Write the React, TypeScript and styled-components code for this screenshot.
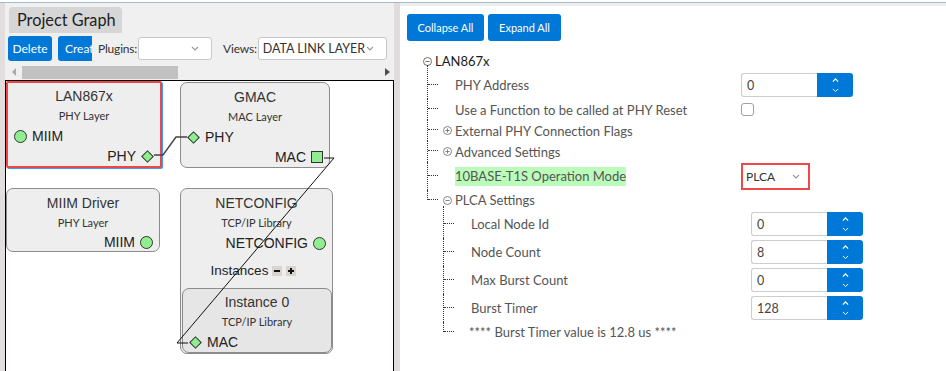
import React from 'react'
import styled, { createGlobalStyle } from 'styled-components'

const GlobalStyle = createGlobalStyle`
  html, body {
    margin: 0;
    padding: 0;
    background: #ffffff;
  }
  body {
    font-family: Lato, 'Open Sans', sans-serif;
  }
  * {
    box-sizing: border-box;
  }
`

const UI = "Lato, 'Open Sans', sans-serif"
const ARIAL = "'Liberation Sans', Arial, sans-serif"

const Frame = styled.div`
  width: 946px;
  height: 371px;
  overflow: hidden;
  padding-top: 2px;
  display: flex;
  flex-direction: column;
`

const Panels = styled.div`
  flex: 1;
  min-height: 0;
  display: flex;
  border-top: 1px solid #a4b8d0;
`

/* ---------- left: project graph ---------- */

const LeftPanel = styled.div`
  width: 394px;
  display: flex;
  flex-direction: column;
  background: #f0f0f0;
  border-left: 5px solid #e2dede;
`

const Tab = styled.div`
  margin: 4px 0 0 4px;
  width: 113px;
  height: 26px;
  background: #d6d6d6;
  border-radius: 4px 4px 0 0;
  padding-left: 8px;
  font-family: ${UI};
  font-size: 16.3px;
  line-height: 26px;
  color: #1e1e1e;
`

const Toolbar = styled.div`
  margin-top: 3px;
  height: 25px;
  padding-left: 3px;
  display: flex;
  align-items: center;
`

const BlueButton = styled.button<{ $w: number; $clip?: boolean }>`
  flex: none;
  height: 25px;
  width: ${p => p.$w}px;
  padding: ${p => (p.$clip ? '0 0 0 7px' : '0')};
  border: none;
  border-radius: ${p => (p.$clip ? '3px 0 0 3px' : '3px')};
  background: #0078d7;
  color: #ffffff;
  font-family: ${UI};
  font-size: 12px;
  white-space: nowrap;
  overflow: hidden;
  text-align: ${p => (p.$clip ? 'left' : 'center')};
  margin-right: 6px;
`

const ToolLabel = styled.span<{ $gap?: number }>`
  flex: none;
  margin-left: ${p => p.$gap || 0}px;
  margin-right: 1px;
  font-family: ${UI};
  font-size: 12px;
  letter-spacing: -0.2px;
  color: #333;
  white-space: nowrap;
`

const Select = styled.div<{ $w: number }>`
  flex: none;
  width: ${p => p.$w}px;
  height: 23px;
  background: #ffffff;
  border: 1px solid #c8c8c8;
  border-radius: 3px;
  display: flex;
  align-items: center;
  justify-content: space-between;
  padding: 0 12px 0 4px;
  font-family: ${UI};
  font-size: 12.5px;
  color: #333;
  white-space: nowrap;
`

const HScroll = styled.div`
  margin-top: 3px;
  height: 16px;
  display: flex;
  align-items: center;
  padding-left: 7px;
`

const Arrow = styled.span<{ $dir: 'left' | 'right' }>`
  width: 0;
  height: 0;
  border-top: 4px solid transparent;
  border-bottom: 4px solid transparent;
  ${p =>
    p.$dir === 'left'
      ? 'border-right: 4px solid #a8a8a8;'
      : 'border-left: 5px solid #505050; margin-left: 207px;'}
`

const Thumb = styled.div`
  margin-left: 6px;
  width: 156px;
  height: 13px;
  background: #c1c1c1;
`

const Canvas = styled.div`
  flex: 1;
  position: relative;
  background: #ffffff;
  border: 1px solid #000;
  border-bottom: none;
  overflow: hidden;
`

const Node = styled.div<{ $x: number; $y: number; $w: number; $h: number; $selected?: boolean }>`
  position: absolute;
  left: ${p => p.$x}px;
  top: ${p => p.$y}px;
  width: ${p => p.$w}px;
  height: ${p => p.$h}px;
  background: #eeeeee;
  border: ${p => (p.$selected ? '2px solid #f04545' : '1px solid #8c8c8c')};
  border-radius: ${p => (p.$selected ? 2 : 7)}px;
  box-shadow: ${p => (p.$selected ? '1px 1px 0 #3d9cf5' : 'none')};
  padding-top: ${p => (p.$selected ? 3 : 4)}px;
  display: flex;
  flex-direction: column;
`

const NodeTitle = styled.div`
  height: 20px;
  line-height: 20px;
  text-align: center;
  font-family: ${ARIAL};
  font-size: 14px;
  color: #333;
`

const NodeSub = styled.div`
  height: 20px;
  line-height: 20px;
  text-align: center;
  font-family: ${UI};
  font-size: 11px;
  color: #333;
`

const PortRow = styled.div<{ $side: 'left' | 'right' }>`
  height: 20px;
  display: flex;
  align-items: center;
  justify-content: ${p => (p.$side === 'left' ? 'flex-start' : 'flex-end')};
  gap: 5px;
  padding: 0 6px;
  font-family: ${ARIAL};
  font-size: 14px;
  color: #222;
`

const Port = styled.span<{ $shape: 'circle' | 'diamond' | 'square' }>`
  flex: none;
  background: #90ee90;
  border: ${p => (p.$shape === 'circle' ? '1.5px' : '1px')} solid #333;
  width: ${p => (p.$shape === 'circle' ? 13 : p.$shape === 'square' ? 12 : 9)}px;
  height: ${p => (p.$shape === 'circle' ? 13 : p.$shape === 'square' ? 12 : 9)}px;
  border-radius: ${p => (p.$shape === 'circle' ? '50%' : '0')};
  transform: ${p => (p.$shape === 'diamond' ? 'rotate(45deg)' : 'none')};
  margin: ${p => (p.$shape === 'diamond' ? '0 2px' : '0')};
`

const InstancesRow = styled.div`
  height: 35px;
  display: flex;
  align-items: center;
  justify-content: center;
  padding-right: 6px;
  font-family: ${ARIAL};
  font-size: 13.5px;
  color: #222;
`

const MiniBox = styled.span`
  width: 10px;
  height: 10px;
  margin-left: 4px;
  background: #d8d4d0;
  display: flex;
  align-items: center;
  justify-content: center;
`

const InstanceBox = styled.div`
  margin: 0 0 -1px 1px;
  height: 65px;
  background: #e6e6e6;
  border: 1px solid #8c8c8c;
  border-radius: 7px;
  padding-top: 3px;
  display: flex;
  flex-direction: column;
`

const Wires = styled.svg`
  position: absolute;
  left: 0;
  top: 0;
  pointer-events: none;
`

/* ---------- splitter ---------- */

const Splitter = styled.div`
  width: 6px;
  background: #e0dcdc;
`

/* ---------- right: configuration tree ---------- */

const RightPanel = styled.div`
  flex: 1;
  background: #ffffff;
  border-top: 3px solid #ededed;
  padding: 8px 0 0 7px;
`

const ButtonRow = styled.div`
  display: flex;
  gap: 4px;
`

const ActionButton = styled.button<{ $w: number }>`
  width: ${p => p.$w}px;
  height: 27px;
  border: none;
  border-radius: 3px;
  background: #0078d7;
  color: #fff;
  font-family: ${UI};
  font-size: 11px;
  padding: 0;
`

const Tree = styled.div`
  margin-top: 10px;
  padding-left: 16px;
`

const RootHead = styled.div`
  height: 20px;
  display: flex;
  align-items: center;
  gap: 3px;
  font-family: ${UI};
  font-size: 13px;
  color: #1a1a1a;
`

const Children = styled.div<{ $indent: number }>`
  margin-left: ${p => p.$indent}px;
`

const Row = styled.div<{ $h: number; $last?: boolean; $lead: number }>`
  position: relative;
  height: ${p => p.$h}px;
  display: flex;
  align-items: center;
  padding-left: 16px;
  &::before {
    content: '';
    position: absolute;
    left: 0;
    top: ${p => -p.$lead}px;
    ${p => (p.$last ? `height: ${Math.floor(p.$h / 2) + p.$lead}px;` : 'bottom: 0;')}
    border-left: 1px dotted #333;
  }
  &::after {
    content: '';
    position: absolute;
    left: 1px;
    top: ${p => Math.floor(p.$h / 2) - 1}px;
    width: 10px;
    border-top: 1px dotted #333;
  }
`

const IconSlot = styled.span`
  width: 9px;
  height: 9px;
  margin-right: 3px;
  display: flex;
`

const Label = styled.span<{ $w: number }>`
  width: ${p => p.$w}px;
  flex: none;
  font-family: ${UI};
  font-size: 13px;
  color: #555;
  white-space: nowrap;
`

const Highlight = styled.span`
  background: #bbfcbb;
  padding: 1px 0 2px;
`

const Spin = styled.div`
  display: flex;
  height: 24px;
`

const SpinField = styled.div`
  width: 76px;
  height: 24px;
  border: 1px solid #cccccc;
  border-right: none;
  border-radius: 3px 0 0 3px;
  padding-left: 5px;
  display: flex;
  align-items: center;
  font-family: ${UI};
  font-size: 12.5px;
  color: #444;
`

const SpinButtons = styled.div`
  width: 36px;
  background: #0078d7;
  border-radius: 0 3px 3px 0;
  display: flex;
  flex-direction: column;
  align-items: center;
  justify-content: center;
  gap: 5px;
`

const Checkbox = styled.span`
  width: 13px;
  height: 13px;
  border: 1px solid #a0a0a0;
  border-radius: 3px;
  background: #fff;
`

const ModeSelect = styled.div`
  width: 69px;
  height: 27px;
  border: 2px solid #f04848;
  display: flex;
  align-items: center;
  padding-left: 3px;
  gap: 17px;
  font-family: ${UI};
  font-size: 12px;
  color: #333;
`

const Note = styled.span`
  font-family: ${UI};
  font-size: 13px;
  color: #555;
  margin-left: -2px;
`

/* ---------- small drawings ---------- */

const Chevron: React.FC<{ color?: string; up?: boolean; w?: number }> = ({ color = '#999', up, w = 8 }) => (
  <svg width={w} height={w / 2 + 1} viewBox="0 0 8 5">
    <polyline
      points={up ? '1,4 4,1 7,4' : '1,1 4,4 7,1'}
      fill="none"
      stroke={color}
      strokeWidth={up ? 1.4 : 1.1}
    />
  </svg>
)

const Toggle: React.FC<{ open: boolean; color?: string }> = ({ open, color = '#777' }) => (
  <svg width="9" height="9" viewBox="0 0 9 9">
    <circle cx="4.5" cy="4.5" r="4" fill="none" stroke={color} strokeWidth="0.9" />
    <line x1="2.4" y1="4.5" x2="6.6" y2="4.5" stroke={color} strokeWidth="0.9" />
    {!open && <line x1="4.5" y1="2.4" x2="4.5" y2="6.6" stroke={color} strokeWidth="0.9" />}
  </svg>
)

const Glyph: React.FC<{ plus?: boolean }> = ({ plus }) => (
  <svg width="8" height="8" viewBox="0 0 8 8">
    <line x1="1" y1="4" x2="7" y2="4" stroke="#111" strokeWidth="2" />
    {plus && <line x1="4" y1="1" x2="4" y2="7" stroke="#111" strokeWidth="2" />}
  </svg>
)

const SpinBox: React.FC<{ value: string }> = ({ value }) => (
  <Spin>
    <SpinField>{value}</SpinField>
    <SpinButtons>
      <Chevron color="#fff" up w={7} />
      <Chevron color="#fff" w={7} />
    </SpinButtons>
  </Spin>
)

interface TreeRowProps {
  h: number
  last?: boolean
  lead?: number
  toggle?: boolean
  labelWidth: number
  children: React.ReactNode
  value?: React.ReactNode
}

const TreeRow: React.FC<TreeRowProps> = ({ h, last, lead = 0, toggle, labelWidth, children, value }) => (
  <Row $h={h} $last={last} $lead={lead}>
    <IconSlot>{toggle !== undefined && <Toggle open={toggle} />}</IconSlot>
    <Label $w={labelWidth}>{children}</Label>
    {value}
  </Row>
)

const plca = [
  { label: 'Local Node Id', value: '0' },
  { label: 'Node Count', value: '8' },
  { label: 'Max Burst Count', value: '0' },
  { label: 'Burst Timer', value: '128' },
]

const App: React.FC = () => {
  return (
    <>
      <GlobalStyle />
      <Frame>
        <Panels>
          <LeftPanel>
            <Tab>Project Graph</Tab>
            <Toolbar>
              <BlueButton $w={44}>Delete</BlueButton>
              <BlueButton $w={34} $clip>
                Create
              </BlueButton>
              <ToolLabel>Plugins:</ToolLabel>
              <Select $w={74}>
                <span />
                <Chevron />
              </Select>
              <ToolLabel $gap={11}>Views:</ToolLabel>
              <Select $w={129}>
                <span>DATA LINK LAYER</span>
                <Chevron />
              </Select>
            </Toolbar>
            <HScroll>
              <Arrow $dir="left" />
              <Thumb />
              <Arrow $dir="right" />
            </HScroll>
            <Canvas>
              <Node $x={0} $y={0} $w={156} $h={87} $selected>
                <NodeTitle>LAN867x</NodeTitle>
                <NodeSub>PHY Layer</NodeSub>
                <PortRow $side="left">
                  <Port $shape="circle" />
                  MIIM
                </PortRow>
                <PortRow $side="right">
                  PHY
                  <Port $shape="diamond" />
                </PortRow>
              </Node>

              <Node $x={174} $y={1} $w={150} $h={86}>
                <NodeTitle>GMAC</NodeTitle>
                <NodeSub>MAC Layer</NodeSub>
                <PortRow $side="left">
                  <Port $shape="diamond" />
                  PHY
                </PortRow>
                <PortRow $side="right">
                  MAC
                  <Port $shape="square" />
                </PortRow>
              </Node>

              <Node $x={0} $y={107} $w={154} $h={64}>
                <NodeTitle>MIIM Driver</NodeTitle>
                <NodeSub>PHY Layer</NodeSub>
                <PortRow $side="right">
                  MIIM
                  <Port $shape="circle" />
                </PortRow>
              </Node>

              <Node $x={174} $y={107} $w={153} $h={166}>
                <NodeTitle>NETCONFIG</NodeTitle>
                <NodeSub>TCP/IP Library</NodeSub>
                <PortRow $side="right">
                  NETCONFIG
                  <Port $shape="circle" />
                </PortRow>
                <InstancesRow>
                  Instances
                  <MiniBox>
                    <Glyph />
                  </MiniBox>
                  <MiniBox>
                    <Glyph plus />
                  </MiniBox>
                </InstancesRow>
                <InstanceBox>
                  <NodeTitle>Instance 0</NodeTitle>
                  <NodeSub>TCP/IP Library</NodeSub>
                  <PortRow $side="left">
                    <Port $shape="diamond" />
                    MAC
                  </PortRow>
                </InstanceBox>
              </Node>

              <Wires width="388" height="290">
                <polyline points="148,74 157,74 170,56 181,56" fill="none" stroke="#444" strokeWidth="1.4" />
                <polyline points="318,77 328,77 171,262 182,262" fill="none" stroke="#111" strokeWidth="1" />
              </Wires>
            </Canvas>
          </LeftPanel>

          <Splitter />

          <RightPanel>
            <ButtonRow>
              <ActionButton $w={77}>Collapse All</ActionButton>
              <ActionButton $w={73}>Expand All</ActionButton>
            </ButtonRow>
            <Tree>
              <RootHead>
                <Toggle open color="#6b5a55" />
                LAN867x
              </RootHead>
              <Children $indent={4}>
                <TreeRow h={28} lead={6} labelWidth={286} value={<SpinBox value="0" />}>
                  PHY Address
                </TreeRow>
                <TreeRow h={21} labelWidth={286} value={<Checkbox />}>
                  Use a Function to be called at PHY Reset
                </TreeRow>
                <TreeRow h={21} toggle={false} labelWidth={286}>
                  External PHY Connection Flags
                </TreeRow>
                <TreeRow h={21} toggle={false} labelWidth={286}>
                  Advanced Settings
                </TreeRow>
                <TreeRow
                  h={28}
                  labelWidth={286}
                  value={
                    <ModeSelect>
                      PLCA
                      <Chevron />
                    </ModeSelect>
                  }
                >
                  <Highlight>10BASE-T1S Operation Mode</Highlight>
                </TreeRow>
                <TreeRow h={20} last toggle labelWidth={286}>
                  PLCA Settings
                </TreeRow>
                <Children $indent={16}>
                  {plca.map((item, i) => (
                    <TreeRow
                      key={item.label}
                      h={28}
                      lead={i === 0 ? 4 : 0}
                      labelWidth={280}
                      value={<SpinBox value={item.value} />}
                    >
                      {item.label}
                    </TreeRow>
                  ))}
                  <TreeRow h={20} last labelWidth={300}>
                    <Note>**** Burst Timer value is 12.8 us ****</Note>
                  </TreeRow>
                </Children>
              </Children>
            </Tree>
          </RightPanel>
        </Panels>
      </Frame>
    </>
  )
}

export default App
